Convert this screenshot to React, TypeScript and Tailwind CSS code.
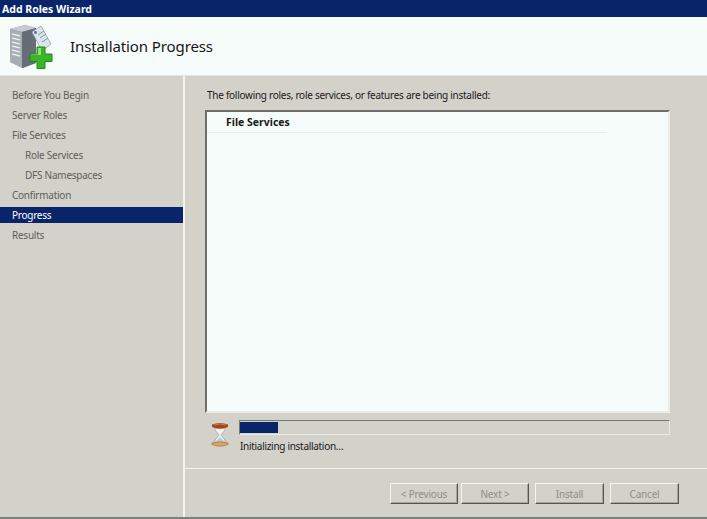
const font = "font-['Noto_Sans',sans-serif]";

function ServerIcon() {
  return (
    <svg width="46" height="46" viewBox="0 0 46 46" className="block">
      <path d="M1 6 L16 2 L27 5 L27 40 L14 45 L1 39 Z" fill="#8f979f" />
      <path d="M1 6 L16 2 L27 5 L13 9 Z" fill="#c4cbd2" />
      <path d="M1 6 L13 9 L13 45 L1 39 Z" fill="#a6adb4" />
      <path d="M13 9 L27 5 L27 40 L13 45 Z" fill="#656e76" />
      <path d="M3 11 L11 13 M3 15 L11 17 M3 19 L11 21 M3 23 L11 25 M3 27 L11 29 M3 31 L11 33" stroke="#e8ecef" strokeWidth="1.5" />
      <path d="M23 9 L32 3 L42 21 L33 28 Z" fill="#dbe4ec" stroke="#8ea0b4" strokeWidth="0.8" />
      <path d="M29 12 L35 8 M31 15 L37 11 M33 19 L39 15" stroke="#7f96ad" strokeWidth="1" />
      <circle cx="26.5" cy="9.5" r="1.4" fill="#5d6f82" />
      <path d="M28 24 H36 V31 H43 V38.5 H36 V45.5 H28 V38.5 H21 V31 H28 Z" fill="#38b52a" stroke="#1d8a17" strokeWidth="1" />
      <path d="M29 25 H32 V32 H22 V31.5 H29 Z" fill="#8fe27a" />
    </svg>
  );
}

function Hourglass() {
  return (
    <svg width="18" height="26" viewBox="0 0 18 26" className="block">
      <path d="M4 6 L14 6 L14 8 L10 13 L14 18 L14 21 L4 21 L4 18 L8 13 L4 8 Z" fill="#eef1f2" stroke="#9ea6a8" strokeWidth="0.8" />
      <path d="M5 19 L9 15 L13 19 L13 21 L5 21 Z" fill="#b9cdd0" />
      <path d="M1 2.5 Q9 -0.5 17 2.5 L17 5 Q9 8.5 1 5 Z" fill="#a8441c" />
      <path d="M3 3 Q9 1 15 3" stroke="#d98a5d" strokeWidth="0.8" fill="none" />
      <path d="M1 21 Q9 18.5 17 21 L17 22.5 Q9 26 1 22.5 Z" fill="#dca36f" stroke="#a8622d" strokeWidth="0.6" />
    </svg>
  );
}

function NavItem({ label, indent, active }: { label: string; indent?: boolean; active?: boolean }) {
  return (
    <div
      className={`h-4 flex items-center mb-1 text-[10px] tracking-[-0.25px] leading-none ${indent ? "pl-[25px]" : "pl-3"} ${
        active ? "bg-[#0a246a] text-white" : "text-[#5f5f5a]"
      }`}
    >
      {label}
    </div>
  );
}

function WizButton({ label, wide }: { label: string; wide?: boolean }) {
  return (
    <div
      className={`${wide ? "w-[69px]" : "w-[68px]"} h-[21px] flex items-center justify-center pt-px text-[10px] tracking-[-0.2px] text-[#8f8e88] bg-[#d2d1ca] border border-t-[#f4f4f0] border-l-[#f4f4f0] border-r-[#55554f] border-b-[#55554f] shadow-[inset_-1px_-1px_0_#a5a49d]`}
    >
      {label}
    </div>
  );
}

export default function App() {
  return (
    <div className={`${font} w-[707px] h-[519px] flex flex-col overflow-hidden bg-[#d2d1ca] border-b-2 border-[#7f7f7a]`}>
      <div className="h-[17px] shrink-0 bg-[#0a246a] text-white text-[10.5px] font-bold leading-[18px] pl-0.5">
        Add Roles Wizard
      </div>
      <div className="h-[59px] shrink-0 bg-[#f6fcf9] flex items-center pl-[9px] border-b border-[#e4e6e0]">
        <ServerIcon />
        <div className="ml-[15px] mt-px text-[15px] text-[#161616] tracking-[-0.1px]">Installation Progress</div>
      </div>
      <div className="flex-1 flex min-h-0">
        <div className="w-[185px] shrink-0 pt-[11px] border-r-2 border-[#f3f3ef] box-border">
          <NavItem label="Before You Begin" />
          <NavItem label="Server Roles" />
          <NavItem label="File Services" />
          <NavItem label="Role Services" indent />
          <NavItem label="DFS Namespaces" indent />
          <NavItem label="Confirmation" />
          <NavItem label="Progress" active />
          <NavItem label="Results" />
        </div>
        <div className="flex-1 min-w-0 flex flex-col">
          <div className="flex-1 min-h-0 pl-5 pr-[37px] pt-[13px]">
            <div className="pl-0.5 text-[10px] leading-[12px] text-[#1a1a1a] tracking-[-0.27px]">
              The following roles, role services, or features are being installed:
            </div>
            <div className="mt-[9px] h-[303px] bg-[#f6fcf9] border-2 border-t-[#6e6e68] border-l-[#6e6e68] border-r-[#ecece6] border-b-[#ecece6]">
              <div className="h-[21px] pl-[19px] pt-0.5 flex items-center text-[10.5px] font-bold text-[#1a1a1a] border-b border-[#e3edf2] w-[400px]">
                File Services
              </div>
            </div>
            <div className="mt-[7px] flex">
              <div className="w-[34px] pl-[6px] pt-[2px] shrink-0">
                <Hourglass />
              </div>
              <div className="flex-1 min-w-0">
                <div className="h-[15px] py-px bg-[#d2d1ca] border border-t-[#797974] border-l-[#797974] border-r-[#ecece6] border-b-[#ecece6]">
                  <div className="h-full w-[38px] bg-[#0a246a]" />
                </div>
                <div className="mt-[5px] ml-[1px] text-[10px] leading-[12px] text-[#1a1a1a] tracking-[-0.3px]">
                  Initializing installation…
                </div>
              </div>
            </div>
          </div>
          <div className="h-[49px] shrink-0 border-t border-[#f3f3ef] flex justify-end pt-[14px] pr-7">
            <WizButton label="< Previous" />
            <div className="w-[3px]" />
            <WizButton label="Next >" />
            <div className="w-[6px]" />
            <WizButton label="Install" wide />
            <div className="w-[6px]" />
            <WizButton label="Cancel" wide />
          </div>
        </div>
      </div>
    </div>
  );
}
